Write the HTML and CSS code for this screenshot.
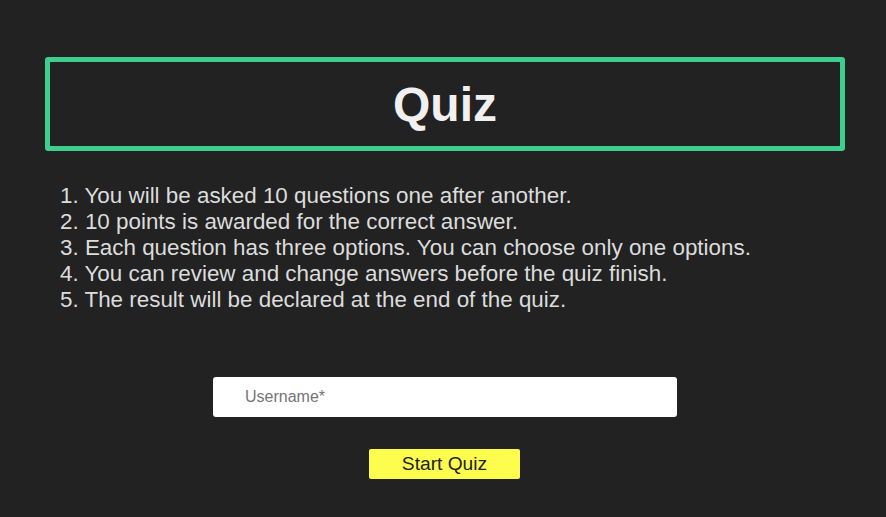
FILE: index.html
```html
<!DOCTYPE html>
<html>
<head>
<meta charset="utf-8">
<title>Quiz</title>
<link rel="stylesheet" href="styles.css">
</head>
<body>
<main class="page">
  <header class="title-box">
    <h1 class="title">Quiz</h1>
  </header>
  <ol class="rules">
    <li>1. You will be asked 10 questions one after another.</li>
    <li>2. 10 points is awarded for the correct answer.</li>
    <li>3. Each question has three options. You can choose only one options.</li>
    <li>4. You can review and change answers before the quiz finish.</li>
    <li>5. The result will be declared at the end of the quiz.</li>
  </ol>
  <form class="start-form">
    <input class="username" type="text" placeholder="Username*">
    <button class="start-btn" type="button">Start Quiz</button>
  </form>
</main>
</body>
</html>
```

FILE: styles.css
```css
html, body {
  margin: 0;
  padding: 0;
  background: #222222;
}
body {
  font-family: "Liberation Sans", Arial, sans-serif;
  color: #dcdcdc;
  padding-left: 4px;
}
.page {
  width: 800px;
  margin: 0 auto;
  padding-top: 57px;
  display: flex;
  flex-direction: column;
  align-items: center;
}
.title-box {
  box-sizing: border-box;
  width: 800px;
  height: 94px;
  border: 5px solid #3ccf8e;
  border-radius: 3px;
  display: flex;
  align-items: center;
  justify-content: center;
}
.title {
  margin: 0;
  font-size: 48px;
  font-weight: bold;
  color: #f0f0f0;
}
.rules {
  list-style: none;
  margin: 32px 0 0 0;
  padding: 0 0 0 15px;
  align-self: stretch;
  font-size: 22.4px;
  line-height: normal;
  color: #dcdcdc;
}
.start-form {
  margin-top: 64px;
  display: flex;
  flex-direction: column;
  align-items: center;
  gap: 32px;
}
.username {
  box-sizing: border-box;
  width: 464px;
  height: 40px;
  border: none;
  border-radius: 3px;
  background: #ffffff;
  padding: 0 0 0 32px;
  font-family: "Liberation Sans", Arial, sans-serif;
  font-size: 16px;
  color: #333;
  outline: none;
}
.username::placeholder {
  color: #757575;
}
.start-btn {
  box-sizing: border-box;
  width: 151px;
  height: 30px;
  margin-right: 1px;
  border: none;
  border-radius: 2px;
  background: #fdfd4d;
  font-family: "Liberation Sans", Arial, sans-serif;
  font-size: 19.2px;
  color: #222;
  padding: 0;
}
```
